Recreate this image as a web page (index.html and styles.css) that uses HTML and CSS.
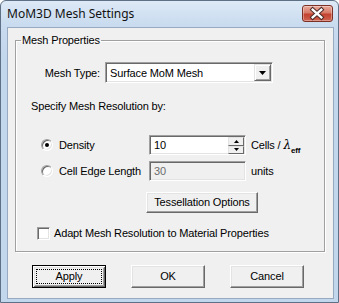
FILE: index.html
```html
<!DOCTYPE html>
<html>
<head>
<meta charset="utf-8">
<link rel="stylesheet" href="styles.css">
</head>
<body>
<div class="window">
  <div class="titlebar">
    <span class="title">MoM3D Mesh Settings</span>
    <span class="close">
      <svg width="31" height="17" viewBox="0 0 31 17">
        <path d="M11 4.5 L20 12.5 M20 4.5 L11 12.5" stroke="#4a2a2a" stroke-width="4.4" stroke-linecap="square" fill="none"/>
        <path d="M11 4.5 L20 12.5 M20 4.5 L11 12.5" stroke="#ffffff" stroke-width="2.4" stroke-linecap="square" fill="none"/>
      </svg>
    </span>
  </div>
  <div class="client">
    <fieldset class="group">
      <legend>Mesh Properties</legend>
      <div class="mesh-row">
        <span class="mesh-label">Mesh Type:</span>
        <div class="combo">
          <span class="combo-text">Surface MoM Mesh</span>
          <span class="combo-btn">
            <svg width="7" height="4" viewBox="0 0 7 4"><path d="M0 0 H7 L3.5 4 Z" fill="#000"/></svg>
          </span>
        </div>
      </div>
      <div class="specify">Specify Mesh Resolution by:</div>
      <div class="res-grid">
        <div class="res-row">
          <span class="radio checked"></span>
          <span class="rlabel">Density</span>
          <div class="edit">
            <span class="edit-text">10</span>
            <div class="spin">
              <span class="spin-btn"><svg width="5" height="3" viewBox="0 0 5 3"><path d="M2.5 0 L5 3 H0 Z" fill="#000"/></svg></span>
              <span class="spin-btn"><svg width="5" height="3" viewBox="0 0 5 3"><path d="M0 0 H5 L2.5 3 Z" fill="#000"/></svg></span>
            </div>
          </div>
          <span class="unit">Cells / <span class="lambda">λ</span><sub>eff</sub></span>
        </div>
        <div class="res-row">
          <span class="radio"></span>
          <span class="rlabel">Cell Edge Length</span>
          <div class="edit disabled">
            <span class="edit-text">30</span>
          </div>
          <span class="unit">units</span>
        </div>
      </div>
      <div class="tess-row">
        <span class="btn tess">Tessellation Options</span>
      </div>
      <div class="check-row">
        <span class="check"></span>
        <span class="check-label">Adapt Mesh Resolution to Material Properties</span>
      </div>
    </fieldset>
    <div class="buttons">
      <span class="btn btn-default"><span class="focus">Apply</span></span>
      <span class="btn">OK</span>
      <span class="btn">Cancel</span>
    </div>
  </div>
</div>
</body>
</html>
```
FILE: styles.css
```css
* { box-sizing: border-box; }
html, body {
  margin: 0;
  padding: 0;
  background: #ffffff;
}
body {
  width: 339px;
  height: 303px;
  overflow: hidden;
  font-family: "Liberation Sans", Arial, sans-serif;
  font-size: 11px;
  letter-spacing: -0.15px;
  color: #000;
}
.window {
  width: 339px;
  height: 303px;
  border: 1px solid #5e7085;
  border-radius: 6px 6px 0 0;
  background: linear-gradient(to bottom, #dde9f6 0px, #c9dbef 24px, #c2d6ec 60px, #c2d6ec 100%);
  padding: 0 4px 3px 6px;
  display: flex;
  flex-direction: column;
}
.titlebar {
  height: 26px;
  display: flex;
  align-items: flex-start;
  justify-content: space-between;
}
.title {
  font-family: "Noto Sans", "Open Sans", sans-serif;
  font-size: 12px;
  letter-spacing: 0;
  line-height: 16px;
  margin-top: 5px;
  color: #111;
}
.close {
  width: 31px;
  height: 17px;
  margin-top: 4px;
  margin-right: 1px;
  border: 1px solid #7d3026;
  border-radius: 3px;
  background: linear-gradient(to bottom, #e9a99a 0%, #d77b69 45%, #c3412f 55%, #cf6350 100%);
  box-shadow: inset 0 0 0 1px rgba(255,255,255,0.35);
  display: flex;
}
.close svg { display: block; margin: -1px 0 0 -1px; }
.client {
  flex: 1;
  border: 1px solid #97aac2;
  background: #f0f0f0;
  display: flex;
  flex-direction: column;
  padding: 0;
}
.group {
  margin: 6px 0 0 7px;
  width: 310px;
  padding: 0 0 11px 0;
  border: 1px solid #a0a0a0;
  box-shadow: inset 1px 1px #ffffff, 1px 1px #ffffff;
  min-width: 0;
}
.group legend {
  margin-left: 5px;
  padding: 0 1px;
  line-height: 13px;
  height: 13px;
}
.mesh-row {
  display: flex;
  align-items: center;
  margin-top: 15px;
}
.mesh-label {
  width: 84px;
  text-align: right;
}
.combo {
  margin-left: 5px;
  width: 168px;
  height: 21px;
  background: #fff;
  border: 1px solid;
  border-color: #a0a0a0 #fff #fff #a0a0a0;
  box-shadow: inset 1px 1px #696969, inset -1px -1px #e3e3e3;
  padding: 1px;
  display: flex;
  align-items: center;
}
.combo-text {
  flex: 1;
  padding-left: 3px;
}
.combo-btn {
  width: 17px;
  height: 17px;
  background: #f0f0f0;
  border: 1px solid;
  border-color: #e3e3e3 #696969 #696969 #e3e3e3;
  box-shadow: inset 1px 1px #fff, inset -1px -1px #a0a0a0;
  display: flex;
  align-items: center;
  justify-content: center;
}
.combo-btn svg { display: block; margin-top: 1px; }
.specify {
  margin-top: 17px;
  margin-left: 15px;
  line-height: 13px;
}
.res-grid {
  margin-top: 22px;
  display: flex;
  flex-direction: column;
  gap: 6px;
}
.res-row {
  display: flex;
  align-items: center;
  height: 20px;
}
.radio {
  margin-left: 25px;
  width: 12px;
  height: 12px;
  border-radius: 50%;
  background: #fff;
  border: 1px solid;
  border-color: #a0a0a0 #fff #fff #a0a0a0;
  box-shadow: inset 1px 1px #696969, inset -1px -1px #e3e3e3;
  display: flex;
  align-items: center;
  justify-content: center;
  margin-top: -1px;
}
.radio.checked::after {
  content: "";
  width: 4px;
  height: 4px;
  border-radius: 50%;
  background: #000;
}
.rlabel {
  margin-left: 6px;
  width: 90px;
}
.edit {
  width: 97px;
  height: 20px;
  background: #fff;
  border: 1px solid;
  border-color: #a0a0a0 #fff #fff #a0a0a0;
  box-shadow: inset 1px 1px #696969, inset -1px -1px #e3e3e3;
  padding: 1px;
  display: flex;
  align-items: center;
}
.edit.disabled {
  background: #f0f0f0;
  color: #6d6d6d;
}
.edit-text {
  flex: 1;
  padding-left: 3px;
}
.spin {
  width: 16px;
  height: 17px;
  display: flex;
  flex-direction: column;
  align-self: flex-start;
}
.spin-btn {
  flex: 1;
  background: #f0f0f0;
  border: 1px solid;
  border-color: #e3e3e3 #696969 #696969 #e3e3e3;
  display: flex;
  align-items: center;
  justify-content: center;
}
.spin-btn svg { display: block; }
.unit {
  margin-left: 5px;
  line-height: 13px;
}
.lambda {
  font-family: "DejaVu Serif", serif;
  font-size: 12px;
  font-style: italic;
}
.unit sub {
  font-size: 8px;
  font-weight: bold;
  vertical-align: -4px;
  line-height: 0;
}
.tess-row {
  margin-top: 11px;
  display: flex;
  padding-left: 130px;
}
.btn {
  display: flex;
  align-items: center;
  justify-content: center;
  background: #f0f0f0;
  border: 1px solid;
  border-color: #fff #696969 #696969 #fff;
  box-shadow: inset -1px -1px #a0a0a0, inset 1px 1px #e3e3e3;
  line-height: 13px;
}
.tess {
  width: 112px;
  height: 21px;
  padding-bottom: 1px;
}
.check-row {
  margin-top: 14px;
  display: flex;
  align-items: center;
}
.check {
  margin-left: 21px;
  width: 13px;
  height: 13px;
  background: #fff;
  border: 1px solid;
  border-color: #a0a0a0 #fff #fff #a0a0a0;
  box-shadow: inset 1px 1px #696969, inset -1px -1px #e3e3e3;
}
.check-label {
  margin-left: 4px;
  line-height: 13px;
}
.buttons {
  margin-top: 13px;
  margin-left: 24px;
  display: flex;
  gap: 25px;
}
.buttons .btn {
  width: 74px;
  height: 23px;
}
.btn-default {
  border: 1px solid #000 !important;
  box-shadow: inset 1px 1px #fff, inset -1px -1px #696969, inset 2px 2px #e3e3e3, inset -2px -2px #a0a0a0;
}
.focus {
  width: 66px;
  height: 15px;
  border: 1px dotted #000;
  display: flex;
  align-items: center;
  justify-content: center;
}
```
